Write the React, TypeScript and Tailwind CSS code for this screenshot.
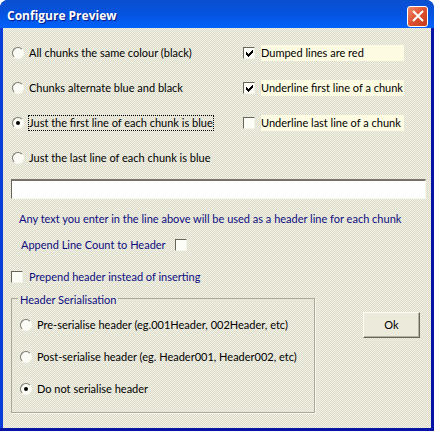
import { useState } from "react";
import type { ReactNode } from "react";

type RadioProps = {
  name: string;
  label: string;
  checked: boolean;
  focused?: boolean;
  onSelect: () => void;
};

function Radio({ name, label, checked, focused, onSelect }: RadioProps) {
  return (
    <label className="flex h-4 items-center gap-1 text-black">
      <span className="relative flex h-3 w-3 shrink-0">
        <input
          type="radio"
          name={name}
          checked={checked}
          onChange={onSelect}
          className="h-3 w-3 appearance-none rounded-full border border-t-[#77776c] border-r-[#f8f8f0] border-b-[#f8f8f0] border-l-[#77776c] bg-[#fcfcf6] outline-none"
        />
        {checked && (
          <span className="pointer-events-none absolute top-1 left-1 h-1 w-1 rounded-full bg-black" />
        )}
      </span>
      <span
        className={
          focused
            ? "border border-dotted border-black leading-[14px]"
            : "border border-transparent leading-[14px]"
        }
      >
        {label}
      </span>
    </label>
  );
}

type CheckProps = {
  id: string;
  checked: boolean;
  onToggle: () => void;
};

function CheckBox({ id, checked, onToggle }: CheckProps) {
  return (
    <span className="relative flex h-3 w-3 shrink-0">
      <input
        id={id}
        type="checkbox"
        checked={checked}
        onChange={onToggle}
        className="h-3 w-3 appearance-none border border-t-[#66665c] border-r-[#f4f4e8] border-b-[#f4f4e8] border-l-[#66665c] bg-[#fdfdf8] outline-none"
      />
      {checked && (
        <svg
          viewBox="0 0 12 12"
          className="pointer-events-none absolute inset-0 h-3 w-3"
          shapeRendering="crispEdges"
        >
          <path d="M3 5v3l2 2 5-5V2L5 7z" fill="#000" />
        </svg>
      )}
    </span>
  );
}

function CreamCheck({ id, checked, onToggle, children }: CheckProps & { children: ReactNode }) {
  return (
    <div className="flex h-4 items-center gap-[6px]">
      <CheckBox id={id} checked={checked} onToggle={onToggle} />
      <label htmlFor={id} className="flex-1 bg-[#fdfbe2] text-black">
        {children}
      </label>
    </div>
  );
}

const colourOptions = [
  "All chunks the same colour (black)",
  "Chunks alternate blue and black",
  "Just the first line of each chunk is blue",
  "Just the last line of each chunk is blue",
];

const serialOptions = [
  "Pre-serialise header (eg.001Header, 002Header, etc)",
  "Post-serialise header (eg. Header001, Header002, etc)",
  "Do not serialise header",
];

export default function App() {
  const [colour, setColour] = useState(2);
  const [serial, setSerial] = useState(2);
  const [header, setHeader] = useState("");
  const [dumpedRed, setDumpedRed] = useState(true);
  const [underFirst, setUnderFirst] = useState(true);
  const [underLast, setUnderLast] = useState(false);
  const [appendCount, setAppendCount] = useState(false);
  const [prepend, setPrepend] = useState(false);

  return (
    <div className="flex min-h-screen flex-col overflow-hidden rounded-t-lg border-b-[3px] border-[#0414a4] bg-[#0a2ec0] font-[Lato,'Liberation_Sans',sans-serif] text-[11px] leading-4 text-[#0c0c80]">
      <header className="flex h-[28px] items-center justify-between bg-linear-to-b from-[#0a4fd0] via-[#0553e0] to-[#0262fa] pt-1 pr-[6px] pl-[7px]">
        <h1 className="font-['Open_Sans','Noto_Sans',sans-serif] text-[12px] font-bold text-white [text-shadow:1px_1px_1px_#0a1883]">
          Configure Preview
        </h1>
        <button
          type="button"
          aria-label="Close"
          className="flex h-[21px] w-[21px] items-center justify-center rounded-[3px] border border-white bg-linear-to-br from-[#ee8a68] via-[#de5030] to-[#c23c18]"
        >
          <svg viewBox="0 0 12 12" className="h-3 w-3" stroke="#fff" strokeWidth="2">
            <path d="M1 1l10 10M11 1L1 11" />
          </svg>
        </button>
      </header>

      <main className="flex-1 border-r-[3px] border-l-[3px] border-r-[#0414a4] border-l-[#0a3cd8] bg-[conic-gradient(#f2f1e6_25%,#dddccb_0_50%,#f2f1e6_0_75%,#dddccb_0)] bg-size-[2px_2px] pt-[17px] pr-[5px] pb-[15px] pl-2">
        <div className="flex justify-between pr-[22px] pl-px">
          <div className="flex flex-col gap-[19px]">
            {colourOptions.map((label, i) => (
              <Radio
                key={label}
                name="colour"
                label={label}
                checked={colour === i}
                focused={colour === i}
                onSelect={() => setColour(i)}
              />
            ))}
          </div>
          <div className="flex w-[161px] flex-col gap-[19px]">
            <CreamCheck id="dumped" checked={dumpedRed} onToggle={() => setDumpedRed(!dumpedRed)}>
              Dumped lines are red
            </CreamCheck>
            <CreamCheck id="first" checked={underFirst} onToggle={() => setUnderFirst(!underFirst)}>
              Underline first line of a chunk
            </CreamCheck>
            <CreamCheck id="last" checked={underLast} onToggle={() => setUnderLast(!underLast)}>
              Underline last line of a chunk
            </CreamCheck>
          </div>
        </div>

        <input
          id="header-text"
          type="text"
          value={header}
          onChange={(e) => setHeader(e.target.value)}
          className="mt-[13px] block h-5 w-full border border-t-2 border-t-[#77716a] border-r-[#f6f6ea] border-b-[#f6f6ea] border-l-[#66665c] bg-[#fefefe] px-1 text-black outline-none"
        />
        <label htmlFor="header-text" className="mt-3 block pl-2 whitespace-nowrap">
          Any text you enter in the line above will be used as a header line for each chunk
        </label>

        <div className="mt-[10px] flex h-4 items-center gap-[9px] pl-[10px]">
          <label htmlFor="append">Append Line Count to Header</label>
          <CheckBox
            id="append"
            checked={appendCount}
            onToggle={() => setAppendCount(!appendCount)}
          />
        </div>
        <div className="mt-4 flex h-4 items-center gap-[6px]">
          <CheckBox id="prepend" checked={prepend} onToggle={() => setPrepend(!prepend)} />
          <label htmlFor="prepend">Prepend header instead of inserting</label>
        </div>

        <div className="mt-[7px] flex items-start justify-between pr-[6px]">
          <fieldset className="w-[304px] border border-[#a9a998] pr-2 pb-[15px] pl-2 shadow-[1px_1px_0_#f8f8ee]">
            <legend className="-ml-[2px] h-3 px-[2px]">Header Serialisation</legend>
            <div className="flex flex-col gap-4 pt-[13px]">
              {serialOptions.map((label, i) => (
                <Radio
                  key={label}
                  name="serial"
                  label={label}
                  checked={serial === i}
                  onSelect={() => setSerial(i)}
                />
              ))}
            </div>
          </fieldset>
          <button
            type="button"
            className="mt-5 h-[26px] w-[57px] border border-t-[#fbfbf2] border-r-[#66665a] border-b-[#66665a] border-l-[#fbfbf2] bg-[#ebeadb] text-black shadow-[inset_-1px_-1px_0_#b4b3a2]"
          >
            Ok
          </button>
        </div>
      </main>
    </div>
  );
}
